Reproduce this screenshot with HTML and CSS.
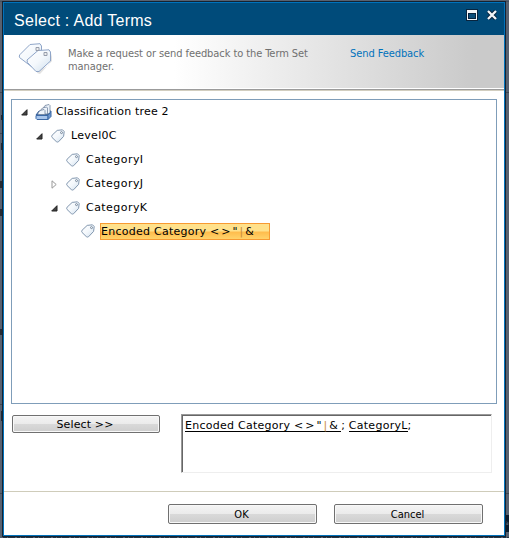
FILE: index.html
```html
<!DOCTYPE html>
<html lang="en"><head><meta charset="utf-8"><title>Select : Add Terms</title><link rel="stylesheet" href="styles.css"></head>
<body>
<svg class="defs" width="0" height="0"><defs>
<linearGradient id="g" x2="1" y2="1"><stop stop-color="#fff"/><stop offset=".5" stop-color="#f4f8fc"/><stop offset="1" stop-color="#cfdfed"/></linearGradient>
<symbol id="tag" viewBox="0 0 14 14"><path d="M6.2 1.4 11.5.8 13.2 2.5 12.6 7.4 7.6 12.7Q6.5 13.5 5.3 12.6L1 8.4Q.2 7.2 1.1 6.2Z" fill="url(#g)" stroke="#8196ae"/><circle cx="10.5" cy="3.6" r="1" fill="#fff" stroke="#60748b" stroke-width=".8"/></symbol>
<symbol id="open" viewBox="0 0 7 7"><path d="M6 .7V6H.7Z" fill="#444" stroke="#222"/></symbol>
<symbol id="closed" viewBox="0 0 7 9"><path d="M1 .8 5.2 4.5 1 8.2Z" fill="#fff" stroke="#999"/></symbol>
</defs></svg>
<svg class="page" width="509" height="538"><path d="M0 1.500h509" stroke="#46505e"/><path d="M0 92.500h2M0 133.500h2M0 404.500h2M0 493.500h2M506 92.500h3M506 493.500h3" stroke="#3e4651"/><path d="M1 115h1v5h-1zM1 143h1v7h-1zM0 181h2v7H0zM0 209h2v7H0zM0 329h2v6H0zM1 411h1v10h-1z" fill="#252a33"/><path d="M3 537.500h506" stroke="#253443" stroke-dasharray="4 1 7 2 3 1"/><path d="M505 515h4v17h-4z" fill="#0c1b2c"/></svg>
<span class="behind">a</span>
<div class="dialog">
<header class="title"><h1>Select : Add Terms</h1>
<svg class="max" width="12" height="12" viewBox="0 0 12 12"><path d="M0 0h12v12H0z" fill="#08253f"/><path d="M1 1h10v10H1z" fill="#f4f6f8"/><path d="M2 4h8v6H2z" fill="#08253f"/><path d="M3 5h6v4H3z" fill="#0b4e7a"/></svg>
<svg class="close" width="12" height="12" viewBox="0 0 12 12"><path d="m2.300 2.300 7.400 7.400m0-7.400-7.400 7.400" stroke="#08253f" stroke-width="4.200"/><path d="m2 2 8 8m0-8-8 8" stroke="#f4f6f8" stroke-width="2.300"/></svg>
</header>
<section class="banner">
<svg class="tags" width="36" height="32" viewBox="0 0 36 32"><path d="m19 30 3 1 12-13v-8l-3 12-12 7" fill="#e2e2e2"/><g fill="url(#g)" stroke="#8fa5c8"><path d="M12 1.500 22 .7 23.500 3v9L14 24 1.500 14.500Q.8 13 2 11.500Z"/><path d="M20 7.500 31 6.800 32.500 9v9L21 28.500H18L9.500 19.500 9 17Z"/><path d="M18 4.500h3v3h-3zM26 9.500h3v3h-3z" fill="#eee" stroke="#969dab"/></g></svg>
<p>Make a request or send feedback to the Term Set<br>manager.</p><a>Send Feedback</a>
</section>
<main class="tree">
<div class="row l0"><svg class="arrow" width="7" height="7"><use href="#open"/></svg>
<svg class="set" width="17" height="17" viewBox="0 0 17 17"><path d="M1 11 4 7h12l-3 4z" fill="#4670aa" stroke="#38639d"/><g fill="#edf3fa" stroke="#70839e" stroke-width=".8"><path d="m10 1.500 4-1 1 1v8h-7v-5z"/><path d="m7.500 4 4-1 1 1v6H5V7z"/><path d="m5 6.500 4-1 1 1v4H3V9z"/></g><path d="M1 11.500h12v4H2l-1-1z" fill="#a7c5ec" stroke="#3b69a7"/><path d="m13 11.500 3-4v5l-3 3z" fill="#6f98ce" stroke="#3b69a7"/></svg><span class="label">Classification tree 2</span></div>
<div class="row l1"><svg class="arrow" width="7" height="7"><use href="#open"/></svg><svg class="tag" width="14" height="14"><use href="#tag"/></svg><span class="label">Level0C</span></div>
<div class="row l2"><span class="arrow"></span><svg class="tag" width="14" height="14"><use href="#tag"/></svg><span class="label">CategoryI</span></div>
<div class="row l2"><svg class="arrow" width="7" height="9"><use href="#closed"/></svg><svg class="tag" width="14" height="14"><use href="#tag"/></svg><span class="label">CategoryJ</span></div>
<div class="row l2"><svg class="arrow" width="7" height="7"><use href="#open"/></svg><svg class="tag" width="14" height="14"><use href="#tag"/></svg><span class="label">CategoryK</span></div>
<div class="row l3"><span class="arrow"></span><svg class="tag" width="14" height="14"><use href="#tag"/></svg><span class="label selected">Encoded Category <span class="sym">&lt; &gt; " <i>|</i> &amp;</span></span></div>
</main>
<section class="picker"><button class="select">Select &gt;&gt;</button><div class="terms"><u>Encoded Category <span class="sym">&lt; &gt; " <i>|</i> &amp;</span></u><span>;&nbsp;</span><u>CategoryL</u>;</div></section>
<footer><button>OK</button><button>Cancel</button></footer>
</div>
</body></html>
```
FILE: styles.css
```css
*{box-sizing:border-box}
body{margin:0;width:509px;height:538px;overflow:hidden;background:#58616f;font:11px "DejaVu Sans",sans-serif;color:#000;position:relative}
.defs,.page{position:absolute;top:0;left:0}
.behind{position:absolute;left:505px;top:518px;font-size:6px;line-height:9px;color:#667487}
.dialog{position:relative;display:flex;flex-direction:column;width:502px;height:534px;margin:2px 0 0 3px;border:1px solid #0072bc;background:#fff;box-shadow:0 0 0 1px #142332}
.title{display:flex;height:32px;background:#004b7a;color:#fff;flex:none}
h1{font:16px/35px "Liberation Sans",sans-serif;margin:0 0 0 10px;flex:1;letter-spacing:.28px}
.max{margin:6px 8px 0 0}.close{margin:6px 6px 0 0}
.banner{display:flex;height:56px;flex:none;border-bottom:1px solid #d2cec0;box-shadow:inset 0 -1px #9b9b9b,inset 0 -2px #fff;background:linear-gradient(90deg,#fff 34%,#cacaca 94%);font-family:"DejaVu Sans Condensed","DejaVu Sans",sans-serif;line-height:13px;color:#707070}
.tags{margin:8px 0 0 14px}
.banner p{margin:12px 0 0 14px;width:282px;white-space:nowrap;letter-spacing:-.08px}
.banner a{margin-top:12px;color:#0072bc;white-space:nowrap;letter-spacing:-.08px}
.tree{height:305px;margin:8px 7px 0;border:1px solid #7f9db9;flex:none}
.row{display:flex;align-items:center;height:24px}
.l0{padding-left:9px}.l1{padding-left:24px}.l2{padding-left:39px}.l3{padding-left:54px}
.arrow{width:7px;margin-right:8px;flex:none}
.l0 .arrow{margin-right:7px}
.set{margin-right:3px}.tag{margin-right:5px}
.label{white-space:nowrap;padding:0 1px;line-height:16px;letter-spacing:.18px}
.l2 .label{letter-spacing:.45px}
.l1 .label{letter-spacing:.3px}
.l3{padding-bottom:2px}
.l3 .selected{width:170px;height:17px;border:1px solid #f79a32;background:linear-gradient(#ffe18b 0 45%,#ffbd4d 55%,#ffd36a);padding:0;line-height:15px}
.l3 .selected,.terms{letter-spacing:.26px}
.sym{letter-spacing:-.75px}
.sym i{font-style:normal;color:#c98b35}
.picker{display:flex;align-items:flex-start;justify-content:space-between;height:78px;margin-top:10px;padding:0 12px 0 8px;flex:none;border-bottom:1px solid #cfccba}
button{border:1px solid #707070;border-radius:2px;background:linear-gradient(#f4f4f4,#ebebeb 49%,#d9d9d9 52%,#cecece);box-shadow:inset 0 0 0 1px #f8f8f8;padding:0;color:#000;font:11px "DejaVu Sans Condensed",sans-serif}
.select{width:148px;height:18px;margin-top:1px;font-family:"DejaVu Sans",sans-serif;letter-spacing:.15px;padding-right:2px}
.terms{width:311px;height:59px;border:1px solid;border-color:#999 #eee #eee #999;box-shadow:inset 1px 1px #666;padding:4px 0 0 3px;line-height:14px;white-space:nowrap}
u{text-decoration:none;background:linear-gradient(#000,#000) 0 100%/100% 1px no-repeat}
.terms .sym{padding-right:4px}
footer{display:flex;justify-content:flex-end;gap:17px;padding:12px 21px 0 0}
footer button{width:149px;height:20px;padding-right:2px}
```
